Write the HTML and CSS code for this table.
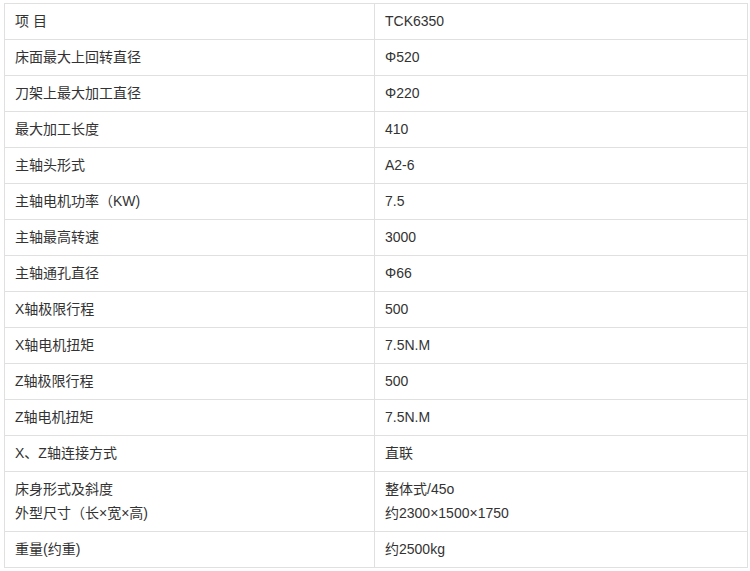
FILE: index.html
```html
<!DOCTYPE html>
<html lang="zh">
<head>
<meta charset="utf-8">
<link rel="stylesheet" href="styles.css">
</head>
<body>
<table class="spec">
<colgroup><col class="c1"><col class="c2"></colgroup>
<tbody>
<tr><td>项 目</td><td>TCK6350</td></tr>
<tr><td>床面最大上回转直径</td><td>Φ520</td></tr>
<tr><td>刀架上最大加工直径</td><td>Φ220</td></tr>
<tr><td>最大加工长度</td><td>410</td></tr>
<tr><td>主轴头形式</td><td>A2-6</td></tr>
<tr><td>主轴电机功率（KW)</td><td>7.5</td></tr>
<tr><td>主轴最高转速</td><td>3000</td></tr>
<tr><td>主轴通孔直径</td><td>Φ66</td></tr>
<tr><td>X轴极限行程</td><td>500</td></tr>
<tr><td>X轴电机扭矩</td><td>7.5N.M</td></tr>
<tr><td>Z轴极限行程</td><td>500</td></tr>
<tr><td>Z轴电机扭矩</td><td>7.5N.M</td></tr>
<tr><td>X、Z轴连接方式</td><td>直联</td></tr>
<tr><td>床身形式及斜度<br>外型尺寸（长×宽×高)</td><td>整体式/45o<br>约2300×1500×1750</td></tr>
<tr><td>重量(约重)</td><td>约2500kg</td></tr>
</tbody>
</table>
</body>
</html>
```
FILE: styles.css
```css
html, body {
  margin: 0;
  padding: 0;
  background: #ffffff;
}
body {
  padding: 3px 0 0 4px;
  font-family: "Liberation Sans", "Noto Sans CJK SC", sans-serif;
  font-size: 14px;
  color: #333333;
}
.spec {
  border-collapse: collapse;
  width: 743px;
  table-layout: fixed;
}
.spec .c1 { width: 370px; }
.spec .c2 { width: 373px; }
.spec td {
  border: 1px solid #e0e0e0;
  padding: 5px 10px 6px 10px;
  line-height: 24px;
  vertical-align: middle;
  text-align: left;
}
```
